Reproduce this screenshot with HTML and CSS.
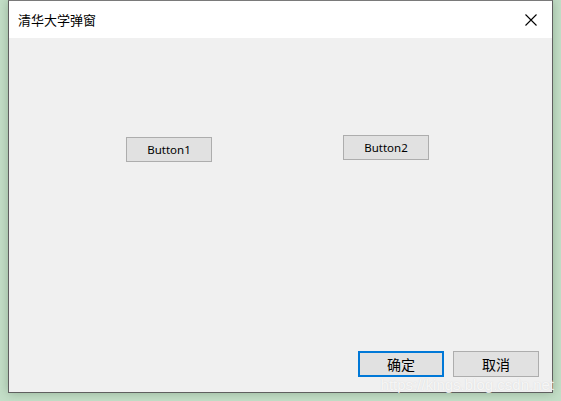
FILE: index.html
```html
<!DOCTYPE html>
<html lang="zh-CN">
<head>
    <meta charset="UTF-8">
    <title>清华大学弹窗</title>
    <link rel="stylesheet" href="styles.css">
</head>
<body>
    <div class="dialog">
        <div class="title-bar">
            <span class="title-text">清华大学弹窗</span>
            <svg class="close-icon" width="12" height="12" viewBox="0 0 12 12">
                <path d="M0.5 0.5 L11.5 11.5 M11.5 0.5 L0.5 11.5" stroke="#000" stroke-width="1.1"/>
            </svg>
        </div>

        <div class="client">
            <div class="button-row">
                <button class="win-button button-one">Button1</button>
                <button class="win-button button-two">Button2</button>
            </div>

            <div class="footer">
                <button class="win-button cn default">确定</button>
                <button class="win-button cn">取消</button>
            </div>
        </div>

        <span class="watermark">https://kings.blog.csdn.net</span>
    </div>
</body>
</html>
```

FILE: styles.css
```css
body {
    margin: 0;
    padding: 0 8px;
    height: 401px;
    overflow: hidden;
    background-color: #c4dfc8;
    font-family: "Noto Sans", "Noto Sans CJK SC", sans-serif;
}

.dialog {
    position: relative;
    width: 545px;
    height: 393px;
    box-sizing: border-box;
    border: 1px solid #5f5f5f;
    border-top-color: #7a7a7a;
    background-color: #f0f0f0;
    display: flex;
    flex-direction: column;
    box-shadow: 0 0 10px rgba(60, 90, 60, 0.35);
}

.title-bar {
    height: 37px;
    background-color: #ffffff;
    display: flex;
    align-items: center;
    justify-content: space-between;
    padding: 0 15px 0 9px;
}

.title-text {
    font-family: "Noto Sans CJK SC", sans-serif;
    font-size: 13px;
    color: #000;
    margin-top: -1px;
}

.close-icon {
    display: block;
}

.client {
    flex: 1;
    display: flex;
    flex-direction: column;
    padding: 0 13px 15px 0;
}

.button-row {
    display: flex;
    align-items: flex-start;
    padding-top: 97px;
}

.win-button {
    width: 86px;
    height: 25px;
    box-sizing: border-box;
    border: 1px solid #adadad;
    background-color: #e1e1e1;
    font-family: "Noto Sans", sans-serif;
    font-size: 11.5px;
    color: #000;
    padding: 0;
}

.button-one {
    margin-left: 117px;
    margin-top: 2px;
}

.button-two {
    margin-left: 131px;
}

.footer {
    margin-top: auto;
    display: flex;
    justify-content: flex-end;
    gap: 9px;
}

.win-button.cn {
    height: 26px;
    font-family: "Noto Sans CJK SC", sans-serif;
    font-size: 14px;
}

.win-button.default {
    border: 2px solid #0078d7;
}

.watermark {
    position: absolute;
    right: -2px;
    bottom: -1px;
    font-family: "Liberation Sans", sans-serif;
    font-size: 15px;
    color: rgba(255, 255, 255, 0.8);
    text-shadow: 0 0 1px rgba(180, 180, 180, 0.5);
}
```
